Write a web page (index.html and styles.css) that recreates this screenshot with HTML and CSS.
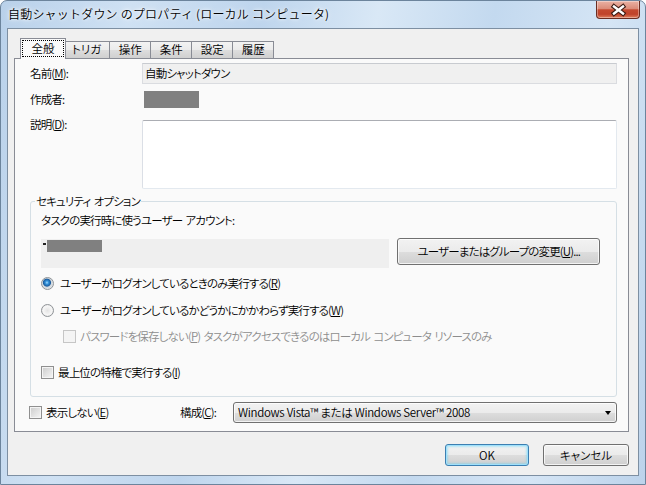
FILE: index.html
```html
<!DOCTYPE html>
<html lang="ja">
  <head>
    <meta charset="UTF-8" />
    <title>自動シャットダウン のプロパティ</title>
    <link rel="stylesheet" href="styles.css">
  </head>

  <body>
    <div class="window">
      <!-- title bar -->
      <div class="titlebar">
        <span class="title">自動シャットダウン のプロパティ (ローカル コンピュータ)</span>
        <div class="close-btn">
          <svg width="44" height="18" viewBox="0 0 44 18">
            <path d="M18 5.5 L27 12.5 M27 5.5 L18 12.5" stroke="#3b1a12" stroke-width="4.6" stroke-linecap="square" />
            <path d="M18 5.5 L27 12.5 M27 5.5 L18 12.5" stroke="#ffffff" stroke-width="2.4" stroke-linecap="square" />
          </svg>
        </div>
      </div>

      <div class="client">
        <!-- tabs -->
        <div class="tabs">
          <div class="tab active"><span class="focus">全般</span></div>
          <div class="tab">トリガ</div>
          <div class="tab">操作</div>
          <div class="tab">条件</div>
          <div class="tab">設定</div>
          <div class="tab">履歴</div>
        </div>

        <div class="panel">
          <div class="row name-row">
            <span class="row-label">名前(<u>M</u>):</span>
            <div class="field-readonly">自動シャットダウン</div>
          </div>
          <div class="row author-row">
            <span class="row-label">作成者:</span>
            <span class="redact author"></span>
          </div>
          <div class="row desc-row">
            <span class="row-label">説明(<u>D</u>):</span>
            <div class="textarea"></div>
          </div>

          <fieldset class="group">
            <legend>セキュリティ オプション</legend>
            <div class="account-label">タスクの実行時に使うユーザー アカウント:</div>
            <div class="account-row">
              <div class="account-field">
                <span class="dash"></span>
                <span class="redact user"></span>
              </div>
              <div class="btn change-btn">ユーザーまたはグループの変更(<u>U</u>)...</div>
            </div>
            <div class="option opt-first"><span class="radio checked"></span>ユーザーがログオンしているときのみ実行する(<u>R</u>)</div>
            <div class="option opt-second"><span class="radio"></span>ユーザーがログオンしているかどうかにかかわらず実行する(<u>W</u>)</div>
            <div class="option opt-sub disabled"><span class="check"></span>パスワードを保存しない(<u>P</u>) タスクがアクセスできるのはローカル コンピュータ リソースのみ</div>
            <div class="option opt-elevated"><span class="check"></span>最上位の特権で実行する(<u>I</u>)</div>
          </fieldset>

          <div class="bottom-row">
            <div class="option"><span class="check"></span>表示しない(<u>E</u>)</div>
            <span class="config-label">構成(<u>C</u>):</span>
            <div class="combo">
              <span>Windows Vista™ または Windows Server™ 2008</span>
              <span class="arrow"></span>
            </div>
          </div>
        </div>

        <!-- dialog buttons -->
        <div class="actions">
          <div class="btn default ok-btn">OK</div>
          <div class="btn cancel-btn">キャンセル</div>
        </div>
      </div>
    </div>
  </body>
</html>
```

FILE: styles.css
```css
*,
*::after,
*::before {
  padding: 0;
  margin: 0;
  box-sizing: border-box;
}
html,
body {
  width: 646px;
  height: 485px;
  overflow: hidden;
}
body {
  font-family: "Noto Sans CJK JP", "Noto Sans", sans-serif;
  font-size: 12px;
  font-weight: 350;
  line-height: 15px;
  color: #000;
  background: #fff;
}
u {
  text-decoration: underline;
  text-underline-offset: 1px;
}

/* glass frame */
.window {
  width: 646px;
  height: 485px;
  display: flex;
  flex-direction: column;
  border: 1px solid #6c849c;
  border-radius: 7px 7px 0 0;
  background: linear-gradient(
    100deg,
    #b9d1ea 0%,
    #cfe1f3 18%,
    #bed5ed 36%,
    #d9e8f6 52%,
    #c3d9ef 68%,
    #d5e5f5 84%,
    #bcd3eb 100%
  );
}
.titlebar {
  display: flex;
  height: 27px;
  padding-left: 7px;
}
.title {
  padding-top: 4px;
  line-height: 17px;
  letter-spacing: 0.2px;
  text-shadow: 0 0 6px #fff, 0 0 3px #fff;
}
.close-btn {
  margin-left: auto;
  margin-right: 5px;
  width: 44px;
  height: 18px;
  border: 1px solid #6a2d22;
  border-top: none;
  border-radius: 0 0 4px 4px;
  background: linear-gradient(
    #eab2a4 0%,
    #db8c79 45%,
    #c4492f 52%,
    #c0432a 78%,
    #e0805f 100%
  );
  box-shadow: inset 0 0 0 1px rgba(255, 255, 255, 0.35);
}
.close-btn svg {
  display: block;
  margin-left: -1px;
}

/* client area */
.client {
  flex: 1;
  display: flex;
  flex-direction: column;
  margin: 0 6px 8px 6px;
  padding: 9px 9px 9px 6px;
  border: 1px solid #7d8fa2;
  background: #f0f0f0;
  font-size: 11.5px;
  letter-spacing: -0.85px;
  word-spacing: 1.5px;
  font-feature-settings: "palt" 1;
}

/* tabs */
.tabs {
  display: flex;
  align-items: flex-end;
  height: 20px;
  padding-left: 8px;
  letter-spacing: 0;
}
.tab {
  height: 17px;
  min-width: 42px;
  padding: 0 8px;
  margin-right: -1px;
  border: 1px solid #898c95;
  border-bottom: none;
  background: linear-gradient(#f3f3f3 0%, #ebebeb 50%, #dddddd 51%, #d0d0d0 100%);
  text-align: center;
  line-height: 15px;
}
.tab.active {
  position: relative;
  z-index: 1;
  height: 21px;
  min-width: 46px;
  margin: 0 -3px -1px -2px;
  padding: 1px 1px 0;
  background: #fafafa;
}
.focus {
  display: block;
  height: 17px;
  border: 1px dotted #000;
  line-height: 14px;
}

.panel {
  flex: 1;
  padding: 4px 11px 0 15px;
  border: 1px solid #898c95;
  background: #fafafa;
}

/* top form rows */
.row {
  display: flex;
  align-items: center;
}
.row-label {
  width: 112px;
  flex: none;
}
.name-row {
  height: 21px;
}
.field-readonly {
  flex: 1;
  height: 21px;
  padding-left: 2px;
  border: 1px solid #dadce0;
  border-top-color: #c8cbd0;
  background: #f0f0f0;
  line-height: 19px;
}
.author-row {
  height: 17px;
  margin-top: 7px;
}
.redact {
  display: block;
  background: #808080;
}
.redact.author {
  width: 55px;
  height: 17px;
  margin-left: 2px;
}
.desc-row {
  align-items: flex-start;
  margin-top: 12px;
}
.desc-row .row-label {
  margin-top: -3px;
}
.textarea {
  flex: 1;
  height: 69px;
  border: 1px solid #e3e9ef;
  border-top-color: #abadb3;
  border-left-color: #dbdfe6;
  border-radius: 2px;
  background: #fff;
}

/* security options */
.group {
  min-width: 0;
  margin-top: 5px;
  padding: 5px 16px 16px 10px;
  border: 1px solid #d5dfe5;
  border-radius: 3px;
}
.group legend {
  margin-left: -6px;
  padding: 0 1px;
  line-height: 14px;
}
.account-row {
  display: flex;
  align-items: flex-start;
  gap: 8px;
  margin-top: 11px;
}
.account-field {
  display: flex;
  align-items: flex-start;
  width: 349px;
  height: 29px;
  padding: 1px 0 0 2px;
  background: #efefef;
}
.dash {
  width: 3px;
  height: 2px;
  margin-top: 3px;
  background: #222;
}
.redact.user {
  width: 55px;
  height: 12px;
  margin-left: 1px;
}

.btn {
  display: flex;
  align-items: center;
  justify-content: center;
  border: 1px solid #707070;
  border-radius: 3px;
  background: linear-gradient(#f2f2f2 0%, #ebebeb 50%, #dddddd 51%, #cfcfcf 100%);
  box-shadow: inset 0 0 0 1px rgba(255, 255, 255, 0.75);
}
.change-btn {
  width: 203px;
  height: 27px;
  margin-top: -1px;
}

.option {
  display: flex;
  align-items: center;
}
.opt-first {
  margin-top: 8px;
}
.opt-second {
  margin-top: 12px;
}
.opt-sub {
  margin-top: 11px;
  padding-left: 22px;
}
.opt-elevated {
  margin-top: 21px;
}
.disabled {
  color: #8d8d8d;
}

.radio {
  flex: none;
  width: 13px;
  height: 13px;
  margin-right: 6px;
  border: 1px solid #8f9397;
  border-radius: 50%;
  background: radial-gradient(circle at 50% 50%, #e4e4e4 0, #f6f6f6 55%, #d8d8d8 100%);
}
.radio.checked {
  background: radial-gradient(
    circle at 45% 42%,
    #a6dcff 0,
    #3594dc 1.6px,
    #1b5c9e 3.6px,
    #cfd6dc 4.4px,
    #f4f4f4 100%
  );
}
.check {
  flex: none;
  width: 13px;
  height: 13px;
  margin-right: 4px;
  border: 1px solid #8f8f8f;
  background: linear-gradient(135deg, #cbcbcb, #f6f6f6);
  box-shadow: inset 0 0 0 1px #f4f4f4;
}
.disabled .check {
  border-color: #c6c6c6;
  background: #f4f4f4;
  box-shadow: none;
}

/* configure row */
.bottom-row {
  display: grid;
  grid-template-columns: 151px 53px 1fr;
  align-items: center;
  height: 21px;
  margin: 5px 0 0 -1px;
}
.combo {
  display: flex;
  align-items: center;
  height: 21px;
  padding: 0 5px 0 4px;
  border: 1px solid #707070;
  border-radius: 3px;
  background: linear-gradient(#f2f2f2 0%, #ebebeb 50%, #dddddd 51%, #cfcfcf 100%);
  box-shadow: inset 0 0 0 1px rgba(255, 255, 255, 0.75);
  white-space: nowrap;
  letter-spacing: -0.3px;
  word-spacing: 0;
}
.arrow {
  margin-left: auto;
  width: 0;
  height: 0;
  border-left: 3.5px solid transparent;
  border-right: 3.5px solid transparent;
  border-top: 4px solid #000;
}

/* OK / cancel */
.actions {
  display: flex;
  justify-content: flex-end;
  gap: 14px;
  margin-top: 12px;
  letter-spacing: 0;
}
.ok-btn {
  width: 84px;
  height: 22px;
}
.cancel-btn {
  width: 86px;
  height: 22px;
}
.btn.default {
  border-color: #3c7fb1;
  box-shadow: inset 0 0 0 1px #9fe0fb, inset 0 0 2px 2px rgba(72, 209, 252, 0.35);
}
```
